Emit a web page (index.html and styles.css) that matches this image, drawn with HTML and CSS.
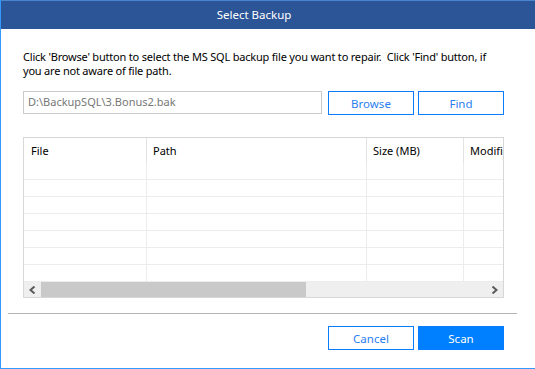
FILE: index.html
```html
<!DOCTYPE html>
<html>
<head>
<meta charset="utf-8">
<link rel="stylesheet" href="styles.css">
</head>
<body>
  <div class="dialog">
    <div class="dialog__title">Select Backup</div>
    <div class="dialog__body">
      <p class="dialog__hint">Click 'Browse' button to select the MS SQL backup file you want to repair.&nbsp; Click 'Find' button, if you are not aware of file path.</p>
      <div class="picker">
        <div class="picker__path">D:\BackupSQL\3.Bonus2.bak</div>
        <button class="btn">Browse</button>
        <button class="btn">Find</button>
      </div>
      <div class="grid">
        <div class="grid__head">
          <div class="grid__cell grid__cell_file">File</div>
          <div class="grid__cell grid__cell_path">Path</div>
          <div class="grid__cell grid__cell_size">Size (MB)</div>
          <div class="grid__cell grid__cell_date">Modified Date</div>
        </div>
        <div class="grid__rows">
          <div class="grid__row"><div class="grid__cell grid__cell_file"></div><div class="grid__cell grid__cell_path"></div><div class="grid__cell grid__cell_size"></div><div class="grid__cell grid__cell_date"></div></div>
          <div class="grid__row"><div class="grid__cell grid__cell_file"></div><div class="grid__cell grid__cell_path"></div><div class="grid__cell grid__cell_size"></div><div class="grid__cell grid__cell_date"></div></div>
          <div class="grid__row"><div class="grid__cell grid__cell_file"></div><div class="grid__cell grid__cell_path"></div><div class="grid__cell grid__cell_size"></div><div class="grid__cell grid__cell_date"></div></div>
          <div class="grid__row"><div class="grid__cell grid__cell_file"></div><div class="grid__cell grid__cell_path"></div><div class="grid__cell grid__cell_size"></div><div class="grid__cell grid__cell_date"></div></div>
          <div class="grid__row"><div class="grid__cell grid__cell_file"></div><div class="grid__cell grid__cell_path"></div><div class="grid__cell grid__cell_size"></div><div class="grid__cell grid__cell_date"></div></div>
          <div class="grid__row"><div class="grid__cell grid__cell_file"></div><div class="grid__cell grid__cell_path"></div><div class="grid__cell grid__cell_size"></div><div class="grid__cell grid__cell_date"></div></div>
          <div class="grid__row"><div class="grid__cell grid__cell_file"></div><div class="grid__cell grid__cell_path"></div><div class="grid__cell grid__cell_size"></div><div class="grid__cell grid__cell_date"></div></div>
        </div>
        <div class="hscroll">
          <span class="hscroll__arrow">
            <svg width="7" height="8" viewBox="0 0 7 8"><path d="M5.5 0.5 L1.5 4 L5.5 7.5" fill="none" stroke="#5a5a5a" stroke-width="2"/></svg>
          </span>
          <div class="hscroll__track"><div class="hscroll__thumb"></div></div>
          <span class="hscroll__arrow">
            <svg width="7" height="8" viewBox="0 0 7 8"><path d="M1.5 0.5 L5.5 4 L1.5 7.5" fill="none" stroke="#5a5a5a" stroke-width="2"/></svg>
          </span>
        </div>
      </div>
    </div>
    <div class="dialog__rule"></div>
    <div class="dialog__actions">
      <button class="btn">Cancel</button>
      <button class="btn btn_primary">Scan</button>
    </div>
  </div>
</body>
</html>
```

FILE: styles.css
```css
body {
    margin: 0;
    background: #fff;
    font-family: "Noto Sans", "Liberation Sans", sans-serif;
    font-size: 11px;
    color: #000;
}
.dialog {
    height: 368px;
    border-left: 1px solid #3399ff;
    border-bottom: 1px solid #3399ff;
    background: #fff;
}
.dialog__title {
    height: 28px;
    border-top: 1px solid #4a86d0;
    background: #2b5597;
    color: #fff;
    line-height: 28px;
    font-size: 11.5px;
    text-align: center;
    padding-right: 28px;
}
.dialog__body {
    padding: 0 31px 0 22px;
}
.dialog__hint {
    margin: 21px 0 0;
    line-height: 14px;
    letter-spacing: -0.2px;
}
.picker {
    display: flex;
    gap: 4px;
    margin-top: 13px;
}
.picker__path {
    flex: 1;
    height: 21px;
    border: 1px solid #cacaca;
    padding: 0 4px;
    margin-right: 2px;
    line-height: 20px;
    color: #777;
}
.btn {
    width: 86px;
    height: 24px;
    padding: 0;
    border: 1px solid #0a7cff;
    background: #fff;
    color: #2a7ef0;
    font-family: inherit;
    font-size: 11.5px;
}
.btn_primary {
    background: #0080ff;
    color: #fff;
}
.grid {
    margin-top: 22px;
    height: 159px;
    border: 1px solid #d7d7d7;
    display: flex;
    flex-direction: column;
    overflow: hidden;
}
.grid__head,
.grid__row {
    display: flex;
}
.grid__head {
    height: 25px;
    line-height: 26px;
}
.grid__row {
    height: 16px;
    border-bottom: 1px solid #ececec;
}
.grid__rows {
    flex: 1;
    overflow: hidden;
}
.grid__cell {
    flex: none;
    box-sizing: border-box;
    border-right: 1px solid #ececec;
    padding-left: 7px;
    white-space: nowrap;
}
.grid__head .grid__cell {
    border-right-color: #e3e3e3;
}
.grid__cell_file {
    width: 123px;
}
.grid__cell_path {
    width: 220px;
    padding-left: 6px;
}
.grid__cell_size {
    width: 97px;
    padding-left: 6px;
}
.grid__cell_date {
    width: 120px;
    padding-left: 6px;
}
.hscroll {
    display: flex;
    height: 15px;
    background: #efefef;
    flex: none;
}
.hscroll__arrow {
    width: 17px;
    display: flex;
    align-items: center;
    justify-content: center;
}
.hscroll__track {
    flex: 1;
}
.hscroll__thumb {
    width: 265px;
    height: 100%;
    background: #c9c9c9;
}
.dialog__rule {
    margin: 15px 18px 0 7px;
    border-top: 1px solid #b4b4b4;
}
.dialog__actions {
    display: flex;
    justify-content: flex-end;
    gap: 4px;
    padding-right: 31px;
    margin-top: 12px;
}
```
